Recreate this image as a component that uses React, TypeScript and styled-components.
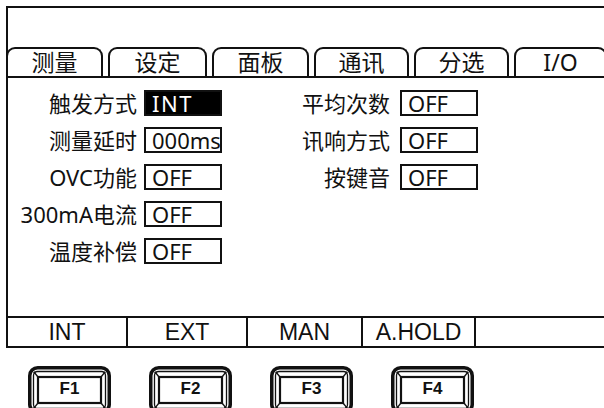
import React from "react";
import styled, { createGlobalStyle } from "styled-components";

const Global = createGlobalStyle`
  html, body { margin: 0; padding: 0; background: #fff; overflow: hidden; }
  body { font-family: "Noto Sans", "Noto Sans CJK SC", sans-serif; color: #111; }
`;

const Page = styled.div`
  width: 604px;
  height: 408px;
  overflow: hidden;
  padding: 6px 0 0 6px;
  box-sizing: border-box;
`;

const Screen = styled.div`
  width: 620px;
  height: 342px;
  box-sizing: border-box;
  border: 2px solid #111;
  display: flex;
  flex-direction: column;
`;

const TitleArea = styled.div`
  height: 39px;
  flex: none;
`;

const TabRow = styled.div`
  height: 31px;
  flex: none;
  box-sizing: border-box;
  display: flex;
  align-items: flex-end;
  gap: 5px;
  margin-left: -2px;
  border-bottom: 2px solid #111;
`;

const Tab = styled.div<{ $w: number }>`
  width: ${(p) => p.$w}px;
  height: 29px;
  box-sizing: border-box;
  border: 2px solid #111;
  border-bottom: none;
  border-radius: 9px 9px 0 0;
  display: flex;
  align-items: center;
  justify-content: center;
  font-size: 23px;
  line-height: 1;
`;

const Settings = styled.div`
  flex: 1;
  display: flex;
  padding-top: 12px;
`;

const Column = styled.div<{ $offset: number }>`
  display: flex;
  flex-direction: column;
  gap: 11px;
  margin-left: ${(p) => p.$offset}px;
`;

const Row = styled.div`
  display: flex;
  align-items: center;
  height: 26px;
`;

const Label = styled.div<{ $w: number; $gap: number }>`
  width: ${(p) => p.$w}px;
  margin-right: ${(p) => p.$gap}px;
  text-align: right;
  white-space: nowrap;
  font-size: 22px;
  line-height: 26px;
`;

const Value = styled.div<{ $active?: boolean }>`
  width: 78px;
  height: 26px;
  box-sizing: border-box;
  border: 2px solid #111;
  padding-left: 6px;
  font-size: 22px;
  line-height: 22px;
  white-space: nowrap;
  background: ${(p) => (p.$active ? "#000" : "#fff")};
  color: ${(p) => (p.$active ? "#fff" : "#111")};
  letter-spacing: ${(p) => (p.$active ? "1.5px" : "0")};
`;

const FuncBar = styled.div`
  height: 30px;
  flex: none;
  box-sizing: border-box;
  border-top: 2px solid #111;
  display: grid;
  grid-template-columns: 120px 120px 115px 113px 1fr;
`;

const FuncCell = styled.div<{ $last?: boolean }>`
  box-sizing: border-box;
  border-right: ${(p) => (p.$last ? "none" : "2px solid #111")};
  display: flex;
  align-items: center;
  justify-content: center;
  font-family: "Liberation Sans", Arial, sans-serif;
  font-size: 23px;
  line-height: 1;
  padding-top: 1px;
`;

const KeyRow = styled.div`
  display: flex;
  gap: 38px;
  padding-left: 22px;
  margin-top: 18px;
`;

const Key = styled.div`
  position: relative;
  width: 83px;
  height: 48px;
  flex: none;
  display: flex;
  align-items: center;
  justify-content: center;
  padding-bottom: 2px;
  box-sizing: border-box;
  font-family: "Liberation Sans", Arial, sans-serif;
  font-weight: bold;
  font-size: 17px;
  color: #111;
`;

const KeyFrame = styled.svg`
  position: absolute;
  left: 0;
  top: 0;
`;

const KeyText = styled.span`
  position: relative;
`;

function KeyShape() {
  return (
    <KeyFrame width="83" height="48" viewBox="0 0 83 48" fill="none" stroke="#111">
      <rect x="1.75" y="1.75" width="79.5" height="44.5" rx="8" strokeWidth="3.5" />
      <rect x="5.5" y="5.5" width="72" height="37" rx="4" strokeWidth="1.3" />
      <rect x="10" y="11" width="63" height="26" strokeWidth="2.2" />
      <line x1="10" y1="11" x2="6" y2="6" strokeWidth="1.3" />
      <line x1="73" y1="11" x2="77" y2="6" strokeWidth="1.3" />
      <line x1="10" y1="37" x2="6" y2="42" strokeWidth="1.3" />
      <line x1="73" y1="37" x2="77" y2="42" strokeWidth="1.3" />
      <circle cx="6.5" cy="6.5" r="1.1" fill="#111" strokeWidth="0" />
      <circle cx="76.5" cy="6.5" r="1.1" fill="#111" strokeWidth="0" />
      <circle cx="6.5" cy="41.5" r="1.1" fill="#111" strokeWidth="0" />
      <circle cx="76.5" cy="41.5" r="1.1" fill="#111" strokeWidth="0" />
    </KeyFrame>
  );
}

const tabs: [string, number][] = [
  ["测量", 97],
  ["设定", 99],
  ["面板", 97],
  ["通讯", 95],
  ["分选", 95],
  ["I/O", 93],
];

const leftRows: [string, string, boolean][] = [
  ["触发方式", "INT", true],
  ["测量延时", "000ms", false],
  ["OVC功能", "OFF", false],
  ["300mA电流", "OFF", false],
  ["温度补偿", "OFF", false],
];

const rightRows: [string, string][] = [
  ["平均次数", "OFF"],
  ["讯响方式", "OFF"],
  ["按键音", "OFF"],
];

const funcs = ["INT", "EXT", "MAN", "A.HOLD", ""];
const keys = ["F1", "F2", "F3", "F4"];

export default function App() {
  return (
    <Page>
      <Global />
      <Screen>
        <TitleArea />
        <TabRow>
          {tabs.map(([t, w]) => (
            <Tab key={t} $w={w}>
              {t}
            </Tab>
          ))}
        </TabRow>
        <Settings>
          <Column $offset={0}>
            {leftRows.map(([l, v, a]) => (
              <Row key={l}>
                <Label $w={129} $gap={7}>
                  {l}
                </Label>
                <Value $active={a}>{v}</Value>
              </Row>
            ))}
          </Column>
          <Column $offset={68}>
            {rightRows.map(([l, v]) => (
              <Row key={l}>
                <Label $w={100} $gap={10}>
                  {l}
                </Label>
                <Value>{v}</Value>
              </Row>
            ))}
          </Column>
        </Settings>
        <FuncBar>
          {funcs.map((f, i) => (
            <FuncCell key={i} $last={i === funcs.length - 1}>
              {f}
            </FuncCell>
          ))}
        </FuncBar>
      </Screen>
      <KeyRow>
        {keys.map((k) => (
          <Key key={k}>
            <KeyShape />
            <KeyText>{k}</KeyText>
          </Key>
        ))}
      </KeyRow>
    </Page>
  );
}
